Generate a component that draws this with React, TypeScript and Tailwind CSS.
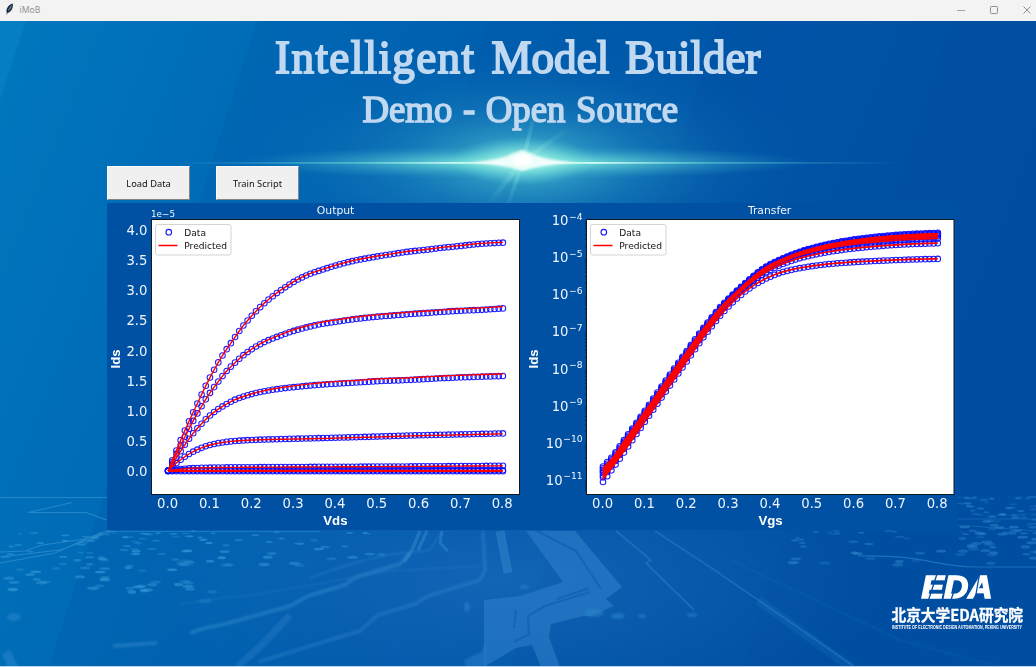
import React from "react";

type Pt = [number, number];

/** Monotone cubic interpolation through a list of knots. */
function sampler(knots: Pt[]) {
  const n = knots.length;
  const d: number[] = [];
  for (let i = 0; i < n - 1; i++) d.push((knots[i + 1][1] - knots[i][1]) / (knots[i + 1][0] - knots[i][0]));
  const m = knots.map((_, i) => {
    if (i === 0) return d[0];
    if (i === n - 1) return d[n - 2];
    return d[i - 1] * d[i] <= 0 ? 0 : (2 * d[i - 1] * d[i]) / (d[i - 1] + d[i]);
  });
  return (x: number) => {
    let i = 0;
    while (i < n - 2 && x > knots[i + 1][0]) i++;
    const h = knots[i + 1][0] - knots[i][0];
    const t = (x - knots[i][0]) / h;
    const t2 = t * t;
    const t3 = t2 * t;
    return (
      (2 * t3 - 3 * t2 + 1) * knots[i][1] +
      (t3 - 2 * t2 + t) * h * m[i] +
      (-2 * t3 + 3 * t2) * knots[i + 1][1] +
      (t3 - t2) * h * m[i + 1]
    );
  };
}

const STEPS = Array.from({ length: 81 }, (_, i) => i);

interface Series {
  data: (x: number) => number;
  fit: (x: number) => number;
}

function Curves({ series, x0, dx, radius, lineWidth }: { series: Series[]; x0: number; dx: number; radius: number; lineWidth: number }) {
  return (
    <g fill="none">
      <g stroke="#0b0bff" strokeWidth="1.05" strokeOpacity="0.92">
        {series.map((s, k) =>
          STEPS.map((i) => <circle key={`${k}-${i}`} cx={x0 + i * dx} cy={s.data(x0 + i * dx)} r={radius} />),
        )}
      </g>
      <g stroke="#ff0000" strokeWidth={lineWidth} strokeLinejoin="round">
        {series.map((s, k) => (
          <polyline key={k} points={STEPS.map((i) => `${x0 + i * dx},${s.fit(x0 + i * dx).toFixed(2)}`).join(" ")} />
        ))}
      </g>
    </g>
  );
}

function Legend({ x }: { x: number }) {
  return (
    <g>
      <rect x={x} y="224.5" width="75.5" height="30.5" rx="2" fill="#fff" stroke="#d4d4d4" />
      <circle cx={x + 13.3} cy="232.2" r="2.8" fill="none" stroke="#1414ff" strokeWidth="1.1" />
      <path d={`M${x + 3} 245.5h19`} stroke="#ff0000" strokeWidth="1.5" />
      <g className="font-['DejaVu_Sans']" fontSize="9.1" fill="#111">
        <text x={x + 28.8} y="235.5">Data</text>
        <text x={x + 28.8} y="249.2">Predicted</text>
      </g>
    </g>
  );
}

const TICKS = [0, 1, 2, 3, 4, 5, 6, 7, 8];

function XTicks({ x0 }: { x0: number }) {
  return (
    <g className="font-['DejaVu_Sans']" fontSize="13.2" fill="#eef5fc" textAnchor="middle">
      {TICKS.map((t) => (
        <text key={t} x={x0 + t * 41.83} y="508">{`0.${t}`}</text>
      ))}
    </g>
  );
}

const OUT_X = 168.1;
const OUT: Series[] = (() => {
  const c1: Pt[] = [[168, 471], [172, 461], [176.3, 451], [180.3, 441], [189, 421.3], [197.3, 403.7], [205.7, 386], [214, 370], [222.5, 355.5], [231, 343], [243, 326], [260, 307.3], [273, 296], [285, 287.5], [297, 280], [309, 274.3], [320, 270.5], [340, 264.3], [353, 261], [377, 256.5], [393, 254], [410, 251.5], [427, 249.7], [443, 247.7], [460, 246], [481, 243.8], [504, 242.6]];
  const c2: Pt[] = [[168, 471], [176.3, 454], [184.7, 437.3], [193, 421.3], [201.3, 406.7], [209.7, 393.3], [218, 382], [226.7, 371], [235, 362.7], [243.3, 355.3], [251.7, 349.3], [260, 344.3], [268.3, 340.3], [276.7, 337], [289.3, 332.3], [301.7, 328.6], [320, 324.3], [340, 321.2], [357, 318.8], [377, 316.7], [393, 315.4], [415, 313.7], [435, 312.4], [457, 310.9], [482, 309.8], [504, 308.3]];
  const c3: Pt[] = [[168, 471], [176.3, 458], [184.7, 445], [193, 433.5], [201.3, 424], [209.7, 415.7], [218, 409.3], [226.7, 404], [235, 399.7], [243.3, 396.6], [252, 394], [260.3, 392], [276.7, 389.2], [293.3, 387.2], [318.3, 384.9], [333, 383.9], [357, 382.5], [380, 381], [403, 380.2], [430, 378.8], [460, 377.4], [504, 376]];
  const c4: Pt[] = [[168, 471], [174, 465], [180.3, 460], [189, 454], [197.3, 449.7], [205.7, 446.3], [214, 444], [222.3, 442.5], [235, 441], [251.7, 440], [285, 439], [318, 438.2], [340, 437.6], [376, 436.6], [415, 435.4], [457, 434.5], [504, 433.4]];
  const c5: Pt[] = [[168, 471], [180, 469.2], [197, 468], [230, 467.4], [318, 466.9], [400, 466.5], [504, 465.8]];
  const shift = (knots: Pt[], by: number): Pt[] =>
    knots.map(([x, y]) => [x, y - by * Math.min(1, Math.max(0, (x - 240) / 90))] as Pt);
  return [
    { data: sampler(c1), fit: sampler(shift(c1, 0.4)) },
    { data: sampler(c2), fit: sampler(shift(c2, 1.9)) },
    { data: sampler(c3), fit: sampler(shift(c3, 2.1)) },
    { data: sampler(c4), fit: sampler(shift(c4, -0.4)) },
    { data: sampler(c5), fit: sampler(c5) },
    { data: () => 470.2, fit: () => 470.4 },
    { data: () => 471.2, fit: () => 471.2 },
  ];
})();

function OutputChart() {
  return (
    <svg className="h-[327px] w-[425px]" viewBox="107 203 425 327" overflow="visible">
      <text x="335.6" y="214.4" textAnchor="middle" fontSize="10.8" fill="#eef5fc" className="font-['DejaVu_Sans']">Output</text>
      <text x="151" y="217" fontSize="8.8" fill="#eef5fc" className="font-['DejaVu_Sans']">1e−5</text>
      <rect x="151.5" y="219.5" width="368" height="275" fill="#fff" stroke="#101820" />
      <Curves series={OUT} x0={OUT_X} dx={4.185} radius={2.8} lineWidth={1.4} />
      <Legend x={155.5} />
      <g className="font-['DejaVu_Sans']" fontSize="13.2" fill="#eef5fc" textAnchor="end">
        {TICKS.map((t) => (
          <text key={t} x="147.4" y={476 - t * 30.12}>{(t * 0.5).toFixed(1)}</text>
        ))}
      </g>
      <XTicks x0={167.6} />
      <g className="font-['Liberation_Sans'] font-bold" fontSize="13.2" fill="#fff" textAnchor="middle">
        <text x="335.4" y="524.6">Vds</text>
        <text transform="translate(119.5 359) rotate(-90)">Ids</text>
      </g>
    </svg>
  );
}

const TR_X = 603;
const TRANSFER: Series[] = (() => {
  const top: Pt[] = [[603, 466.5], [607.3, 462], [611.7, 457.5], [623.7, 440.5], [636, 423.5], [653.7, 398], [670, 374.5], [690.3, 346], [703, 328.5], [711.7, 317.5], [720.3, 307], [732.7, 294.7], [745.3, 283], [759, 271.5], [767, 266], [783, 258.2], [803, 250.7], [827, 244.3], [853, 239.6], [883, 236], [910, 234], [938.5, 232.8]];
  const low: Pt[] = [[603, 482], [607.3, 476], [620, 458.3], [636.7, 433.7], [653.7, 409], [670.7, 384.5], [687, 361], [703.3, 337.5], [712, 326], [720, 316], [729, 306], [741, 295], [753, 286], [766.7, 278.3], [783, 272], [803, 267.6], [830, 264], [856.7, 262], [886.7, 260.5], [916.7, 259.4], [938.5, 258.9]];
  const a = sampler(top);
  const b = sampler(low);
  // Each drain bias leaves the lowest curve at its own rate once the device saturates.
  const mix = (lin: number, sat: number) => (x: number) => {
    const t = Math.min(1, Math.max(0, (x - 690) / 110));
    const w = lin + (sat - lin) * t * t * (3 - 2 * t);
    return a(x) + (b(x) - a(x)) * w;
  };
  const weights: Pt[] = [[0, 0], [0.12, 0.03], [0.22, 0.06], [0.32, 0.1], [0.43, 0.14], [0.58, 0.22], [0.7, 0.4], [1, 1]];
  return weights.map(([lin, sat], i) => {
    const data = mix(lin, sat);
    const lift = i === 0 ? 0.9 : i < 5 ? 0.2 : -0.2;
    return { data, fit: (x: number) => data(x) + lift - (x < 640 ? ((640 - x) / 37) * (i === 7 ? 2.5 : -1) : 0) };
  });
})();

function TransferChart() {
  const exps = [4, 5, 6, 7, 8, 9, 10, 11];
  const minor = exps.flatMap((e) =>
    [2, 3, 4, 5, 6, 7, 8, 9].map((k) => 220 + (e - 4) * 37.1 + 37.1 * (1 - Math.log10(k))).filter((y) => y < 494),
  );
  return (
    <svg className="h-[327px] w-[425px]" viewBox="532 203 425 327" overflow="visible">
      <text x="769.6" y="214.4" textAnchor="middle" fontSize="10.8" fill="#eef5fc" className="font-['DejaVu_Sans']">Transfer</text>
      <path d={minor.map((y) => `M584.8 ${y.toFixed(1)}h1.7`).join("")} stroke="#061c3c" strokeWidth="0.7" />
      <rect x="586.5" y="219.5" width="367.5" height="275" fill="#fff" stroke="#101820" />
      <Curves series={TRANSFER} x0={TR_X} dx={4.185} radius={2.8} lineWidth={1.7} />
      <Legend x={590.5} />
      <g className="font-['DejaVu_Sans']" fill="#eef5fc" textAnchor="end">
        {exps.map((e, i) => (
          <text key={e} x="582.6" y={225.3 + i * 37.05} fontSize="13.2">
            10<tspan dy="-5.2" dx="0.6" fontSize="9.2">−{e}</tspan>
          </text>
        ))}
      </g>
      <XTicks x0={602.6} />
      <g className="font-['Liberation_Sans'] font-bold" fontSize="13.2" fill="#fff" textAnchor="middle">
        <text x="770.6" y="524.6">Vgs</text>
        <text transform="translate(538 359) rotate(-90)">Ids</text>
      </g>
    </svg>
  );
}

/** Perspective field of small pads, denser toward the horizon. */
function Pads({ cx, spread, count, y0, y1, seed }: { cx: number; spread: number; count: number; y0: number; y1: number; seed: number }) {
  let s = seed;
  const rnd = () => {
    s = (s * 16807) % 2147483647;
    return s / 2147483647;
  };
  return (
    <g>
      {Array.from({ length: count }, (_, i) => {
        const t = Math.pow(rnd(), 1.5);
        return (
          <ellipse key={i} cx={cx + (rnd() - 0.5) * spread} cy={y0 + t * (y1 - y0)} rx={2.4 + t * 2 + rnd() * 2} ry={0.8 + t * 1} opacity={0.4 + rnd() * 0.6} />
        );
      })}
    </g>
  );
}

function Backdrop() {
  return (
    <svg className="absolute inset-0 h-full w-full" viewBox="0 21 1036 646" preserveAspectRatio="none" aria-hidden="true">
      <defs>
        <linearGradient id="base" gradientUnits="userSpaceOnUse" x1="0" y1="30" x2="930" y2="400">
          <stop offset="0" stopColor="#0077be" />
          <stop offset="0.22" stopColor="#006db8" />
          <stop offset="0.48" stopColor="#0061b0" />
          <stop offset="0.78" stopColor="#0056a8" />
          <stop offset="1" stopColor="#0051a3" />
        </linearGradient>
        <radialGradient id="floor" gradientUnits="userSpaceOnUse" cx="0" cy="0" r="1" gradientTransform="translate(500 580) scale(380 140)">
          <stop offset="0" stopColor="#1f6dbd" stopOpacity="0.6" />
          <stop offset="1" stopColor="#1a68bb" stopOpacity="0" />
        </radialGradient>
        <radialGradient id="halo" gradientUnits="userSpaceOnUse" cx="0" cy="0" r="1" gradientTransform="translate(523 162) scale(280 112)">
          <stop offset="0" stopColor="#5ed5dc" stopOpacity="0.95" />
          <stop offset="0.2" stopColor="#3fb3cd" stopOpacity="0.68" />
          <stop offset="0.45" stopColor="#2a96c4" stopOpacity="0.4" />
          <stop offset="0.75" stopColor="#1b80bc" stopOpacity="0.14" />
          <stop offset="1" stopColor="#1272b8" stopOpacity="0" />
        </radialGradient>
        <radialGradient id="streak" gradientUnits="userSpaceOnUse" cx="0" cy="0" r="1" gradientTransform="translate(523 162.5) scale(290 17)">
          <stop offset="0" stopColor="#9ff5e8" stopOpacity="0.95" />
          <stop offset="0.4" stopColor="#62d4d6" stopOpacity="0.6" />
          <stop offset="1" stopColor="#2c9cc6" stopOpacity="0" />
        </radialGradient>
        <radialGradient id="bloom" gradientUnits="userSpaceOnUse" cx="0" cy="0" r="1" gradientTransform="translate(523 161) scale(72 24)">
          <stop offset="0" stopColor="#c9fff2" stopOpacity="0.95" />
          <stop offset="0.4" stopColor="#9af0e2" stopOpacity="0.6" />
          <stop offset="1" stopColor="#6fdcd9" stopOpacity="0" />
        </radialGradient>
        <radialGradient id="core" gradientUnits="userSpaceOnUse" cx="0" cy="0" r="1" gradientTransform="translate(522 160) scale(18 11)">
          <stop offset="0" stopColor="#ffffff" />
          <stop offset="0.4" stopColor="#ffffff" stopOpacity="0.9" />
          <stop offset="1" stopColor="#c8fff2" stopOpacity="0" />
        </radialGradient>
        <radialGradient id="ray" gradientUnits="userSpaceOnUse" cx="523" cy="160" r="58">
          <stop offset="0" stopColor="#c4fff2" stopOpacity="0.4" />
          <stop offset="0.5" stopColor="#8be6e2" stopOpacity="0.16" />
          <stop offset="1" stopColor="#6fd8dc" stopOpacity="0" />
        </radialGradient>
        <linearGradient id="beam" gradientUnits="userSpaceOnUse" x1="170" y1="0" x2="900" y2="0">
          <stop offset="0" stopColor="#48bdd0" stopOpacity="0" />
          <stop offset="0.25" stopColor="#58cdd4" stopOpacity="0.7" />
          <stop offset="0.4" stopColor="#d2fff4" />
          <stop offset="0.49" stopColor="#ffffff" />
          <stop offset="0.58" stopColor="#d2fff4" />
          <stop offset="0.74" stopColor="#58cdd4" stopOpacity="0.6" />
          <stop offset="1" stopColor="#48bdd0" stopOpacity="0" />
        </linearGradient>
        <filter id="soft" x="-5%" y="-20%" width="110%" height="140%">
          <feGaussianBlur stdDeviation="0.75" />
        </filter>
        <filter id="softer" x="-5%" y="-20%" width="110%" height="140%">
          <feGaussianBlur stdDeviation="1.2" />
        </filter>
      </defs>
      <rect y="21" width="1036" height="646" fill="url(#base)" />
      <path d="M0 21H26L0 100z" fill="#0a8acb" fillOpacity="0.45" />
      <path d="M257 21H1036V667H49z" fill="#0055a8" fillOpacity="0.22" />
      <path d="M488 21H1036V667H281z" fill="#0052a8" fillOpacity="0.1" />
      <path d="M719 21H1036V667H512z" fill="#004ca0" fillOpacity="0.2" />
      <path d="M950 21H1036V667H743z" fill="#004a9c" fillOpacity="0.25" />
      <rect y="430" width="1036" height="237" fill="url(#floor)" />

      <g filter="url(#soft)">
        <g fill="#3396d6" fillOpacity="0.72">
          <Pads cx={110} spread={210} count={95} y0={533} y1={592} seed={77} />
          <Pads cx={260} spread={250} count={34} y0={531} y1={566} seed={93} />
        </g>
        <g fill="#2e83ca" fillOpacity="0.6">
          <Pads cx={915} spread={250} count={40} y0={531} y1={566} seed={41} />
          <Pads cx={998} spread={85} count={80} y0={497} y1={558} seed={59} />
        </g>
        <g fill="none" stroke="#3d9ad6" strokeWidth="1.2" strokeOpacity="0.6">
          <path d="M0 497.5H107M28 512.5L72 502.5M28 512.5H86L107 520M0 552L25 551L42 545L85 539L112 529M0 563L55 553L88 538L115 531M0 557L60 550L110 532" />
          <path d="M107 531.5H320" strokeOpacity="0.4" />
        </g>
        <g fill="none" stroke="#3489cd" strokeOpacity="0.5" strokeLinejoin="round">
          <path d="M500 531L508 573" strokeWidth="9" />
          <path d="M442 531L440 543L448 551" strokeWidth="3" />
          <path d="M616 531L651 560L646 563L694 610M655 531L710 567L780 615L855 667" strokeWidth="1.8" strokeOpacity="0.4" />
          <path d="M858 556C930 555 930 566 975 567H1036" strokeWidth="1.2" strokeOpacity="0.6" />
          <path d="M958 519H1036M958 525L1036 531" strokeWidth="1.2" strokeOpacity="0.35" />
          <path d="M420 531L412 550L404 562M427 531L418 550" strokeWidth="3.5" />
        </g>
        <path d="M526 531H575L622 587L606 599L614 606L591 616H583L551 624L549 637L560 667H541L532 645L516 648L484 667V600L520 596L563 582z" fill="#2e80cb" fillOpacity="0.58" />
        <path d="M557 599L589 588M514 628L516 610M514 642L529 634L528 616L545 606L590 592M537 531L576 551L601 589" fill="none" stroke="#1760b5" strokeWidth="2.2" strokeOpacity="0.8" />
      </g>

      <g filter="url(#softer)">
        <g fill="none" stroke="#3489cd" strokeLinejoin="round">
          <path d="M113 646L157 643M190 633L205 628L225 624L290 606L308 596L345 585L356 577L400 564L410 553" strokeWidth="4" strokeOpacity="0.48" />
          <path d="M310 578L332 570L362 561L388 555L430 550L442 531" strokeWidth="2" strokeOpacity="0.38" />
          <path d="M237 667L262 645L290 615" strokeWidth="7" strokeOpacity="0.32" />
          <path d="M258 662L320 643L360 631L378 615L415 604L428 596L480 580L485 570L483 531" strokeWidth="4" strokeOpacity="0.36" />
          <path d="M180 605L205 600L260 594L390 571L480 566" strokeWidth="1.5" strokeOpacity="0.3" />
          <path d="M758 600L850 667" strokeWidth="9" strokeOpacity="0.18" />
          <path d="M730 560L900 640L1000 667" strokeWidth="1.5" strokeOpacity="0.18" />
        </g>
        <path d="M464 660L482 651L486 640V667H466z" fill="#2e80cb" fillOpacity="0.5" />
        <g fill="#2b85cb" fillOpacity="0.55">
          <ellipse cx="14" cy="617" rx="7" ry="4" />
          <path d="M2 655L10 649L18 667H8z" />
          <ellipse cx="185" cy="563" rx="9" ry="3" />
          <ellipse cx="205" cy="601" rx="7" ry="1.8" />
          <ellipse cx="467" cy="607" rx="3" ry="5" />
          <ellipse cx="594" cy="613" rx="10" ry="4" />
          <ellipse cx="618" cy="616" rx="7" ry="3" />
          <ellipse cx="642" cy="616" rx="4" ry="2" />
          <ellipse cx="692" cy="615" rx="6" ry="2" />
          <ellipse cx="524" cy="587" rx="5" ry="2" />
        </g>
      </g>

      <rect x="240" y="50" width="570" height="224" fill="url(#halo)" />
      <rect x="230" y="140" width="590" height="45" fill="url(#streak)" />
      <g fill="url(#ray)" filter="url(#soft)">
        <path d="M521 160L582 116L585 120L525 162zM521 160L534 108L538 110L525 160zM521 158L488 200L492 203L525 162zM521 160L506 205L510 206L525 160z" />
      </g>
      <rect x="170" y="162" width="730" height="1.8" fill="url(#beam)" />
      <rect x="448" y="135" width="150" height="52" fill="url(#bloom)" />
      <path d="M470 162.8Q508 159 522 150Q536 159 578 162.8Q538 165 523 171Q508 165 470 162.8z" fill="#fff" fillOpacity="0.85" filter="url(#softer)" />
      <rect x="500" y="145" width="44" height="30" fill="url(#core)" />
      <rect y="666" width="1036" height="1" fill="#b9d7ef" />
    </svg>
  );
}

function TitleBar() {
  return (
    <header className="flex h-[21px] shrink-0 items-center bg-[#f3f3f3] pr-[5px] pl-[5px]">
      <svg className="-mt-[2px] h-[13px] w-[9px]" viewBox="0 0 9 13">
        <path d="M7.8 0.5C5 1 2.5 3.5 1.7 6.3C1.2 8 1.5 9.2 1.9 9.8L1.3 12.4L2.6 10C5 9.4 6.8 7.3 7.5 4.8C7.9 3.3 8.1 1.8 7.8 0.5z" fill="#1c2733" />
        <path d="M6.9 1.8C5 3.4 3.4 5.8 2.8 8.4C4.8 7.5 6.6 4.7 6.9 1.8z" fill="#4d86c4" />
      </svg>
      <span className="-mt-px ml-[5.5px] font-['Noto_Sans'] text-[8.6px] leading-none text-[#929292]">iMoB</span>
      <div className="-mt-[2px] ml-auto flex items-center gap-[25px]">
        <svg className="h-2 w-2" viewBox="0 0 8 8" stroke="#a0a0a0"><path d="M0 4.5h8" /></svg>
        <svg className="h-2 w-2 overflow-visible" viewBox="0 0 8 8" fill="none" stroke="#8e8e8e"><rect x="0.5" y="0.5" width="7" height="7" rx="0.8" /></svg>
        <svg className="h-2 w-2" viewBox="0 0 8 8" stroke="#8e8e8e"><path d="M0.5 0.5l7 7M7.5 0.5l-7 7" /></svg>
      </div>
    </header>
  );
}

function ToolButton({ children }: { children: React.ReactNode }) {
  return (
    <button className="h-[34px] w-[83px] border-t border-r-[1.5px] border-b-[1.5px] border-l border-t-[#fafafa] border-r-[#858585] border-b-[#858585] border-l-[#fafafa] bg-[#f0f0f0] pt-px font-['Noto_Sans'] text-[9.3px] leading-none text-[#111]">
      {children}
    </button>
  );
}

function Logo() {
  return (
    <svg className="h-[72px] w-[140px]" viewBox="888 566 140 72" overflow="visible">
      <text x="921.5" y="598.3" textLength="71" lengthAdjust="spacingAndGlyphs" fontSize="31.5" fill="#fff" stroke="#fff" strokeWidth="1.5" className="font-['Liberation_Sans'] font-bold italic">EDA</text>
      <path d="M928.5 600L937 574M951 600L956 585M975 600L979.5 574" stroke="#0051a3" strokeWidth="1.3" />
      <text x="891.5" y="620.8" textLength="131.5" lengthAdjust="spacingAndGlyphs" fontSize="15.5" fill="#fff" stroke="#fff" strokeWidth="0.3" className="font-['Noto_Sans_CJK_SC',sans-serif] font-bold">北京大学EDA研究院</text>
      <text x="892" y="629.2" textLength="130" lengthAdjust="spacingAndGlyphs" fontSize="4.8" fill="#fff" className="font-['Liberation_Sans'] font-bold">INSTITUTE OF ELECTRONIC DESIGN AUTOMATION, PEKING UNIVERSITY</text>
    </svg>
  );
}

export default function App() {
  return (
    <div className="flex h-[667px] w-[1036px] flex-col overflow-hidden">
      <TitleBar />
      <main className="relative flex flex-1 flex-col">
        <Backdrop />
        <div className="relative flex flex-1 flex-col">
          <div className="flex h-[145px] flex-col items-center pt-[8px] font-['Liberation_Serif'] whitespace-nowrap text-[#c1d9f0]">
            <h1 className="h-[56px] scale-x-96 text-[47px] leading-[57px] font-normal [-webkit-text-stroke:1.9px_#c1d9f0] [word-spacing:5px]">
              <span className="tracking-[1.4px]">Intelligent</span> Model Builder
            </h1>
            <h2 className="h-[48px] translate-x-[2px] scale-x-[0.955] text-[38.5px] leading-[49px] font-normal [-webkit-text-stroke:1.6px_#c1d9f0] [word-spacing:1.5px]">Demo - Open Source</h2>
          </div>
          <div className="ml-[107px] flex h-[37px] items-start gap-[26px]">
            <ToolButton>Load Data</ToolButton>
            <ToolButton>Train Script</ToolButton>
          </div>
          <section className="ml-[107px] flex h-[327px] w-[850px] bg-[#0051a3]">
            <OutputChart />
            <TransferChart />
          </section>
          <div className="mt-[36px] flex justify-end pr-[8px]">
            <Logo />
          </div>
        </div>
      </main>
    </div>
  );
}
